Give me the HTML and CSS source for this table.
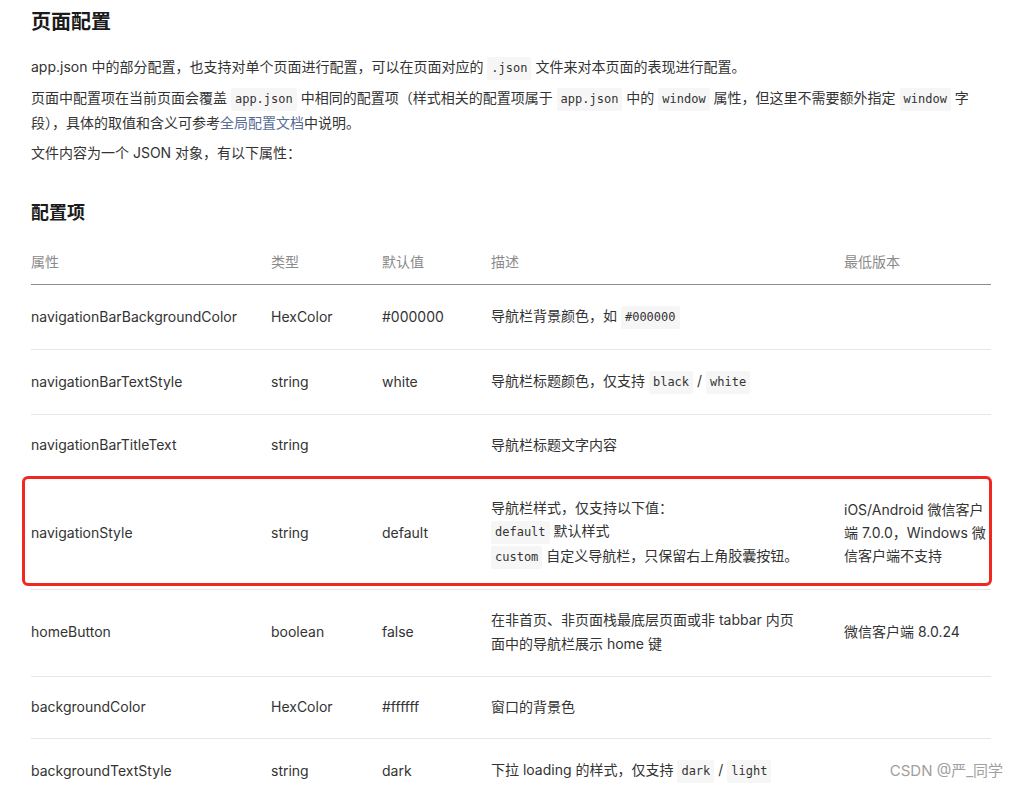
FILE: index.html
```html
<!DOCTYPE html>
<html lang="zh-CN">
<head>
<meta charset="utf-8">
<title>页面配置</title>
<link rel="stylesheet" href="styles.css">
</head>
<body>
<div class="page">
  <h1 class="title">页面配置</h1>
  <p class="para">app.json 中的部分配置，也支持对单个页面进行配置，可以在页面对应的 <code class="code">.json</code> 文件来对本页面的表现进行配置。</p>
  <p class="para">页面中配置项在当前页面会覆盖 <code class="code">app.json</code> 中相同的配置项（样式相关的配置项属于 <code class="code">app.json</code> 中的 <code class="code">window</code> 属性，但这里不需要额外指定 <code class="code">window</code> 字段），具体的取值和含义可参考<a class="link" href="#">全局配置文档</a>中说明。</p>
  <p class="para">文件内容为一个 JSON 对象，有以下属性：</p>

  <h2 class="subtitle">配置项</h2>
  <table class="cfg">
    <colgroup>
      <col class="c1"><col class="c2"><col class="c3"><col class="c4"><col class="c5">
    </colgroup>
    <thead>
      <tr><th>属性</th><th>类型</th><th>默认值</th><th>描述</th><th>最低版本</th></tr>
    </thead>
    <tbody>
      <tr class="has-code"><td>navigationBarBackgroundColor</td><td>HexColor</td><td>#000000</td><td>导航栏背景颜色，如 <code class="code">#000000</code></td><td></td></tr>
      <tr class="has-code"><td>navigationBarTextStyle</td><td>string</td><td>white</td><td>导航栏标题颜色，仅支持 <code class="code">black</code> / <code class="code">white</code></td><td></td></tr>
      <tr><td>navigationBarTitleText</td><td>string</td><td></td><td>导航栏标题文字内容</td><td></td></tr>
      <tr class="multi has-code"><td class="anchor">navigationStyle<div class="highlight"></div></td><td>string</td><td>default</td><td>导航栏样式，仅支持以下值：<br><code class="code">default</code> 默认样式<br><code class="code">custom</code> 自定义导航栏，只保留右上角胶囊按钮。</td><td>iOS/Android 微信客户端 7.0.0，Windows 微信客户端不支持</td></tr>
      <tr class="two-line"><td>homeButton</td><td>boolean</td><td>false</td><td>在非首页、非页面栈最底层页面或非 tabbar 内页面中的导航栏展示 home 键</td><td>微信客户端 8.0.24</td></tr>
      <tr><td>backgroundColor</td><td>HexColor</td><td>#ffffff</td><td>窗口的背景色</td><td></td></tr>
      <tr class="has-code"><td>backgroundTextStyle</td><td>string</td><td>dark</td><td>下拉 loading 的样式，仅支持 <code class="code">dark</code> / <code class="code">light</code></td><td></td></tr>
    </tbody>
  </table>
</div>
<div class="watermark">CSDN @严_同学</div>
</body>
</html>
```

FILE: styles.css
```css
html, body {
  margin: 0;
  padding: 0;
  background: #ffffff;
}

body {
  font-family: "Inter", "Noto Sans CJK SC", sans-serif;
  font-size: 14px;
  color: #333333;
  overflow: hidden;
}

.page {
  width: 960px;
  margin-left: 31px;
  padding-top: 8px;
}

.title {
  margin: 0 0 19px;
  font-size: 20px;
  line-height: 28px;
  font-weight: 700;
  color: #1b1b1b;
}

.para {
  margin: 0 0 6px;
  line-height: 24px;
}

.code {
  display: inline-block;
  font-family: "DejaVu Sans Mono", monospace;
  font-size: 12px;
  line-height: 17px;
  padding: 3px 4px;
  background: #f6f6f6;
  border-radius: 2px;
  color: #333333;
  vertical-align: baseline;
}

.link {
  color: #576b95;
  text-decoration: none;
}

.subtitle {
  margin: 35px 0 14px;
  font-size: 18px;
  line-height: 26px;
  font-weight: 700;
  color: #1b1b1b;
}

.cfg {
  width: 960px;
  table-layout: fixed;
  border-collapse: collapse;
}

.c1 { width: 240px; }
.c2 { width: 111px; }
.c3 { width: 109px; }
.c4 { width: 353px; }
.c5 { width: 147px; }

.cfg th {
  text-align: left;
  font-weight: 400;
  color: #8a8a8a;
  line-height: 24px;
  padding: 10px 0;
  border-bottom: 1px solid #8c8c8c;
}

.cfg td {
  line-height: 24px;
  padding: 18px 12px 19px 0;
  border-bottom: 1px solid #e6e6e6;
  vertical-align: middle;
  color: #333333;
}

.cfg tr.has-code td {
  padding-top: 19px;
  padding-bottom: 20px;
}

.cfg tr.two-line td {
  padding-bottom: 20px;
}

.cfg td:nth-child(4) {
  padding-right: 40px;
}

.cfg td:nth-child(5) {
  padding-right: 0;
}

.cfg tr.multi td {
  line-height: 23px;
}

.anchor {
  position: relative;
}

.highlight {
  position: absolute;
  left: -9px;
  top: -1px;
  bottom: 3px;
  width: 970px;
  box-sizing: border-box;
  border: 3px solid #f1281f;
  border-radius: 6px;
  pointer-events: none;
}

.watermark {
  position: absolute;
  right: 16px;
  top: 760px;
  font-size: 15px;
  line-height: 22px;
  color: #a0a0a0;
  font-family: "Inter", "Noto Sans CJK SC", sans-serif;
}
```
